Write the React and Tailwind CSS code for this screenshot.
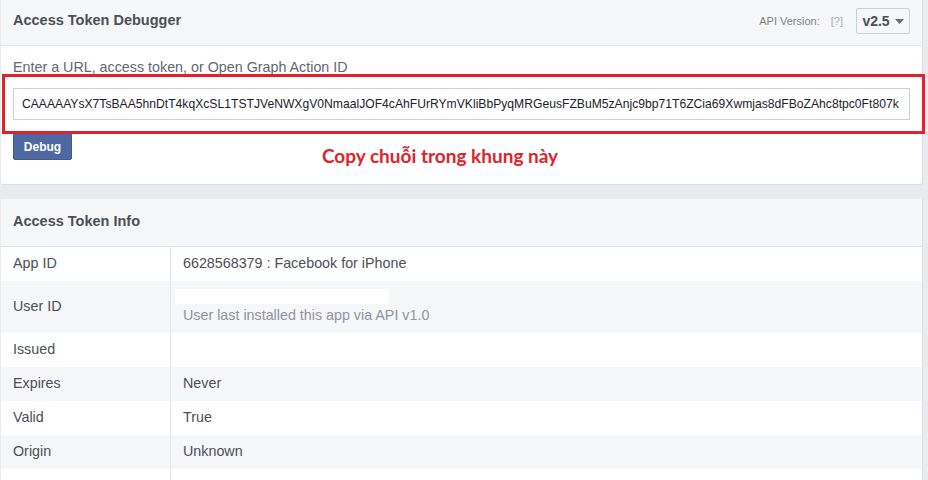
import React from "react";

const font = { fontFamily: '"Liberation Sans", Arial, sans-serif' };

function Row({ label, children, alt, h = "h-[34px]" }) {
  return (
    <div className={`flex ${h} ${alt ? "bg-[#f6f7f9]" : "bg-white"}`}>
      <div className="w-[170px] shrink-0 border-r border-[#e5e6e9] pl-3 flex items-center text-[14.3px] text-[#4b4f56]">
        {label}
      </div>
      <div className="flex-1 pl-3 flex flex-col justify-center text-[14.3px] text-[#4b4f56]">
        {children}
      </div>
    </div>
  );
}

export default function App() {
  const token =
    "CAAAAAYsX7TsBAA5hnDtT4kqXcSL1TSTJVeNWXgV0NmaalJOF4cAhFUrRYmVKliBbPyqMRGeusFZBuM5zAnjc9bp71T6ZCia69Xwmjas8dFBoZAhc8tpc0Ft807k";
  return (
    <div
      className="relative w-[928px] h-[480px] overflow-hidden bg-[#e9ebee] pl-px pr-[5px]"
      style={font}
    >
      {/* Card 1 */}
      <div className="bg-white border-r border-b border-[#dddfe2] rounded-b-[3px]">
        <div className="h-[46px] bg-[#f6f7f9] border-b border-[#e5e6e9] flex items-center px-3">
          <div className="font-bold text-[14.5px] text-[#4b4f56] -mt-[3px]">Access Token Debugger</div>
          <div className="ml-auto flex items-center -mt-[3px]">
            <span className="text-[11px] text-[#7f7f7f]">API Version:</span>
            <span className="text-[11px] text-[#a7abb1] ml-[11px]">[?]</span>
            <div className="ml-[13px] h-[26px] w-[54px] border border-[#ccd0d5] bg-[#f6f7f9] rounded-[2px] flex items-center justify-center gap-[5px]">
              <span className="font-bold text-[14px] text-[#4b4f56]">v2.5</span>
              <svg width="9" height="5" viewBox="0 0 9 5">
                <path d="M0 0h9L4.5 5z" fill="#6a7079" />
              </svg>
            </div>
          </div>
        </div>
        <div className="px-3 pt-[12px] pb-[24px]">
          <div className="text-[14.3px] leading-[18px] text-[#606770]">
            Enter a URL, access token, or Open Graph Action ID
          </div>
          <div className="mt-[12px] h-[32px] border border-[#ccd0d5] bg-white flex items-center pl-[8px] pr-[3px]">
            <div className="whitespace-nowrap text-[12.15px] text-[#1d2129]">{token}</div>
          </div>
          <button className="mt-[13px] h-[27px] w-[59px] bg-[#4e69a2] border border-[#435a8b] rounded-[2px] text-white font-bold text-[12px] flex items-center justify-center">
            Debug
          </button>
        </div>
      </div>

      {/* Card 2 */}
      <div className="mt-[14px] bg-white border-r border-[#dddfe2]">
        <div className="h-[48px] bg-[#f6f7f9] border-b border-[#dddfe2] flex items-center px-3">
          <div className="font-bold text-[14.5px] text-[#4b4f56] -mt-px">Access Token Info</div>
        </div>
        <Row label="App ID">
          <span>6628568379 : Facebook for iPhone</span>
        </Row>
        <Row label="User ID" alt h="h-[52px]">
          <div className="h-[15px] w-[214px] bg-white -ml-2 mt-[1px]" />
          <span className="text-[#90949c] mt-[1px]">User last installed this app via API v1.0</span>
        </Row>
        <Row label="Issued">
          <span />
        </Row>
        <Row label="Expires" alt>
          <span>Never</span>
        </Row>
        <Row label="Valid">
          <span>True</span>
        </Row>
        <Row label="Origin" alt>
          <span>Unknown</span>
        </Row>
        <Row label="">
          <span />
        </Row>
      </div>

      {/* annotation overlay */}
      <div className="absolute left-[2px] top-[74px] w-[923px] h-[60px] border-[3px] border-[#e0232a]" />
      <div
        className="absolute left-[322px] top-[144px] text-[19px] font-bold text-[#e0232a] leading-[24px]"
        style={{ fontFamily: 'Lato, "Open Sans", sans-serif' }}
      >
        Copy chuỗi trong khung này
      </div>
    </div>
  );
}
